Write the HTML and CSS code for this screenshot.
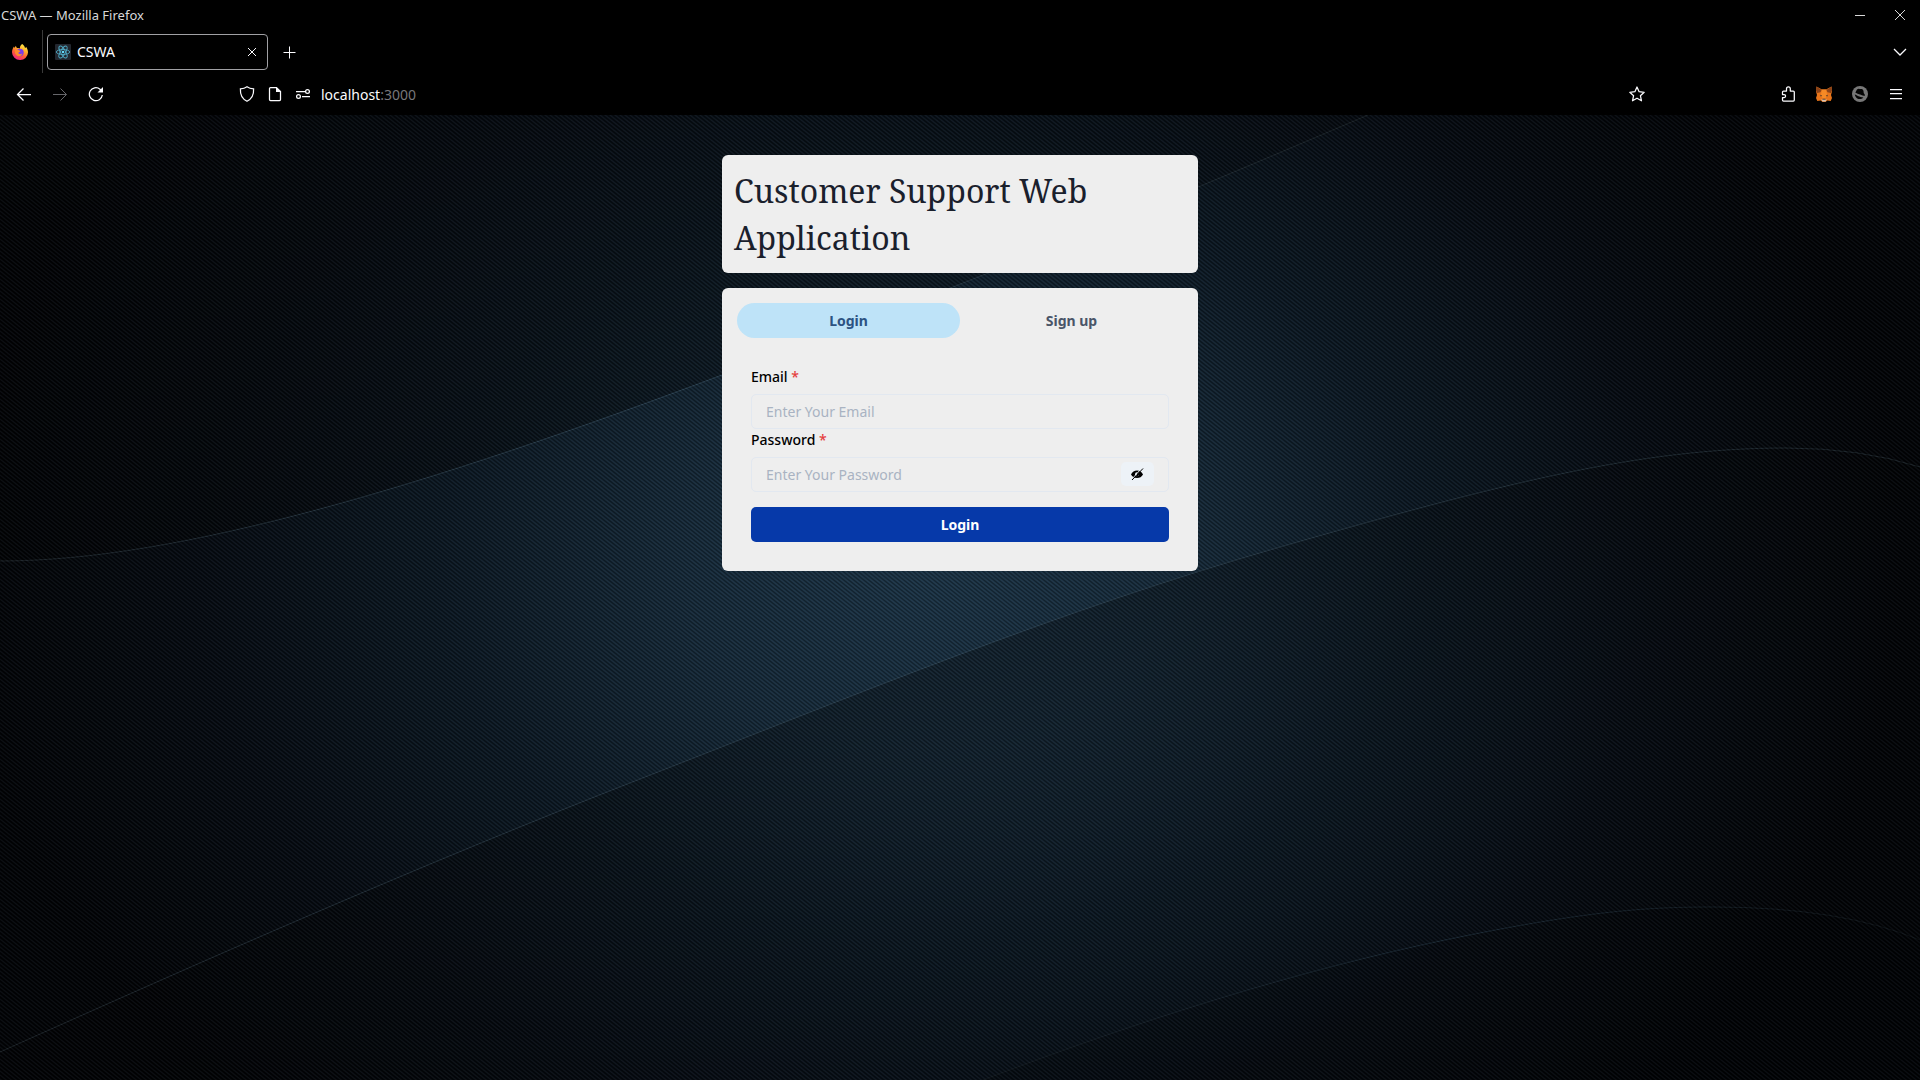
FILE: index.html
```html
<!DOCTYPE html>
<html lang="en">
<head>
<meta charset="utf-8">
<title>CSWA</title>
<link rel="stylesheet" href="styles.css">
</head>
<body>
<header class="browser">
  <div class="titlebar">
    <span class="window-title">CSWA — Mozilla Firefox</span>
    <button class="window-btn" type="button" aria-label="Minimize"><svg class="icon" viewBox="0 0 16 16"><path d="M3 8.5h10"/></svg></button>
    <button class="window-btn" type="button" aria-label="Close"><svg class="icon" viewBox="0 0 16 16"><path d="M3 3l10 10M13 3L3 13"/></svg></button>
  </div>
  <div class="tabstrip">
    <button class="view-btn" type="button" aria-label="Firefox View">
      <svg class="icon logo" viewBox="0 0 16 16">
        <defs>
          <linearGradient id="flame" x1="0.8" y1="0" x2="0.3" y2="1"><stop offset="0" stop-color="#fff44f"/><stop offset="0.35" stop-color="#ffb02a"/><stop offset="0.65" stop-color="#ff5a36"/><stop offset="1" stop-color="#f0208a"/></linearGradient>
        </defs>
        <path fill="url(#flame)" d="M10.200 0C12 1.200 12.800 2.500 13 4c.8-.3 1-.8 1-1.200 1.300 1.700 2 3.600 2 5.700A7.800 7.800 0 0 1 8 16 7.900 7.900 0 0 1 0 8.300C0 6.200.8 4 2 2.500l.3 1.600C3 2.800 3.500 2.200 4 1.700c0 1.100.5 1.800 1.300 2.300 1.200-.2 1.900 0 2.600.4C7.800 2.500 8.800 1 10.200 0z"/>
        <circle cx="8" cy="8.500" r="3.700" fill="#7a3bea"/>
        <path fill="#ff8a2b" d="M3 6.300c1.500-1 2.700-.8 4 0 .6.300 1.400.5 1.400 1C8 8.200 6.500 8 6.300 9c.7 1.400 3 1.600 4 .2-.3 2-1.600 3-3.300 3-2.800 0-4.700-3-4-5.900z"/>
      </svg>
    </button>
    <div class="tab">
      <svg class="icon favicon" viewBox="0 0 16 16">
        <rect width="16" height="16" rx="1" fill="#23272f" stroke="none"/>
        <g fill="none" stroke="#4fa9c4" stroke-width="0.9"><ellipse cx="8" cy="8" rx="6.700" ry="2.500"/><ellipse cx="8" cy="8" rx="6.700" ry="2.500" transform="rotate(60 8 8)"/><ellipse cx="8" cy="8" rx="6.700" ry="2.500" transform="rotate(120 8 8)"/></g>
        <circle cx="8" cy="8" r="1.300" fill="#61dafb" stroke="none"/>
      </svg>
      <span class="tab-label">CSWA</span>
      <button class="tab-close" type="button" aria-label="Close tab"><svg class="icon" viewBox="0 0 16 16"><path d="M4 4l8 8M12 4l-8 8"/></svg></button>
    </div>
    <button class="tool-btn" type="button" aria-label="New tab"><svg class="icon" viewBox="0 0 16 16"><path d="M8.500 2.500v12M2.500 8.500h12"/></svg></button>
    <button class="tool-btn push-right" type="button" aria-label="List all tabs"><svg class="icon bold" viewBox="0 0 16 16"><path d="M2 5l6 6 6-6"/></svg></button>
  </div>
  <nav class="toolbar" aria-label="Navigation">
    <button class="tool-btn" type="button" aria-label="Back"><svg class="icon bold" viewBox="0 0 16 16"><path d="M15 8.500H1.500M7.500 2.500l-6 6 6 6"/></svg></button>
    <button class="tool-btn" type="button" aria-label="Forward" disabled><svg class="icon" viewBox="0 0 16 16"><path d="M1 8.500h13.500M8.500 2.500l6 6-6 6"/></svg></button>
    <button class="tool-btn" type="button" aria-label="Reload"><svg class="icon bold" viewBox="0 0 16 16"><path d="M14.300 9A6.500 6.500 0 1 1 12 3.200l1 1"/><path class="solid" d="M15 1v5.500H9.500z"/></svg></button>
    <span class="spacer"></span>
    <div class="urlbar">
      <button class="url-btn" type="button" aria-label="Tracking protection"><svg class="icon bold" viewBox="0 0 16 16"><path d="M8 .8c2 1.500 4.200 2 6.600 2.100.3 5.600-1.600 10-6.600 12.300C3 12.900 1.100 8.500 1.400 2.900 3.800 2.800 6 2.300 8 .8z"/></svg></button>
      <button class="url-btn" type="button" aria-label="Site information"><svg class="icon bold" viewBox="0 0 16 16"><path d="M3.500 1.500h6l4 4v8a1 1 0 0 1-1 1h-9a1 1 0 0 1-1-1v-11a1 1 0 0 1 1-1z"/><path class="solid" d="M9 1v5h5z"/></svg></button>
      <button class="url-btn" type="button" aria-label="Permissions"><svg class="icon bold" viewBox="0 0 16 16"><path d="M1 5.500h9M7 10.500h8"/><circle cx="12.500" cy="5.500" r="1.900"/><circle cx="3.500" cy="10.500" r="1.900"/></svg></button>
      <div class="address" role="textbox" aria-label="Address">localhost<span class="port">:3000</span></div>
      <button class="url-btn" type="button" aria-label="Bookmark this page"><svg class="icon bold" viewBox="0 0 16 16"><path stroke-linejoin="round" d="M8 1l2.100 4.700 5.100.6-3.800 3.400 1.100 5.100L8 12.200l-4.500 2.600 1.100-5.100L.8 6.300l5.100-.6z"/></svg></button>
    </div>
    <span class="spacer"></span>
    <button class="tool-btn" type="button" aria-label="Extensions"><svg class="icon bold" viewBox="0 0 16 16"><path stroke-linejoin="round" d="M2.500 8.500V6a1 1 0 0 1 1-1H6.500V2.800a1.900 1.900 0 0 1 3.800 0V5h3a1 1 0 0 1 1 1v8a1 1 0 0 1-1 1h-9.800a1 1 0 0 1-1-1v-2.500h1.600a1.500 1.500 0 0 0 0-3z"/></svg></button>
    <button class="tool-btn" type="button" aria-label="MetaMask">
      <svg class="icon logo" viewBox="0 0 16 16">
        <path fill="#e8751a" d="M.5.5L6 3.500h4l5.500-3 .5 5-1 3.500 1 3-1.300 3-3.400-.6L9.500 16h-3l-1.800-1.600-3.400.6L0 12l1-3-1-3.500z"/>
        <path fill="#8a4319" d="M.5.5L5.600 4 4.500 6.300 1 7 0 4.500zM15.500.5L10.400 4l1.100 2.300 3.500.7 1-2.500z"/>
        <path fill="#f58a26" d="M6 3.500h4l1 5-1.500 4h-3L5 8.500z"/>
        <path fill="#3a342e" d="M4.200 8.800l2 1-1.500.6zM11.800 8.800l-2 1 1.500.6zM6.700 12.700h2.600l.3 1H6.400z"/>
        <path fill="#d5c4b5" d="M5.200 13.200l1.200.6h3.200l1.200-.6-1.200 2.300H6.400z"/>
      </svg>
    </button>
    <button class="tool-btn" type="button" aria-label="Content blocker">
      <svg class="icon logo" viewBox="0 0 16 16"><circle cx="8" cy="8" r="8" fill="#777"/><path fill="#050505" d="M3.300 6.400c1-.3 1-3.600 3.400-3.600 1 0 1.500.5 2.500.2 2.500 0 2.300 2.500 2.600 4.200.5.800 1.400 1.500 1.200 2.300-1.800.6-3.400-.3-5-.9-1.600-.6-3.200-1.500-4.700-2.200zM2.800 8.500c2.500.7 4.300 2.800 8.600 2.900-1.500 1.800-4.300 2-6.100 1.100C4 11.800 3.100 10.200 2.800 8.500z"/></svg>
    </button>
    <button class="tool-btn" type="button" aria-label="Menu"><svg class="icon bold" viewBox="0 0 16 16"><path d="M2 3.500h12M2 7.500h12M2 12.500h12"/></svg></button>
  </nav>
</header>

<main class="page">
  <svg class="backdrop" viewBox="0 0 1920 965" preserveAspectRatio="none" aria-hidden="true">
    <defs>
      <radialGradient id="glow" gradientUnits="userSpaceOnUse" cx="0" cy="0" r="1" gradientTransform="translate(930 450) scale(970 760)">
        <stop offset="0" stop-color="#1b3345"/><stop offset="0.250" stop-color="#152938"/><stop offset="0.500" stop-color="#0b1721"/><stop offset="0.750" stop-color="#050a10"/><stop offset="1" stop-color="#010204"/>
      </radialGradient>
      <linearGradient id="shade-top" x1="0" y1="1" x2="0" y2="0"><stop offset="0" stop-color="#000" stop-opacity="0.450"/><stop offset="1" stop-color="#000" stop-opacity="0.200"/></linearGradient>
      <linearGradient id="shade-low" gradientUnits="userSpaceOnUse" x1="900" y1="520" x2="1060" y2="900"><stop offset="0" stop-color="#000" stop-opacity="0.350"/><stop offset="1" stop-color="#000" stop-opacity="0"/></linearGradient>
      <linearGradient id="edge" x1="0" y1="0" x2="1" y2="0"><stop offset="0" stop-color="#1a2024"/><stop offset="0.500" stop-color="#2b4252"/><stop offset="1" stop-color="#181f23"/></linearGradient>
    </defs>
    <rect width="1920" height="965" fill="url(#glow)"/>
    <path fill="url(#shade-top)" d="M0 446C180 446 430 370 722 260C900 195 1100 115 1368 0H0z"/>
    <path fill="url(#shade-low)" d="M0 937C200 847 420 750 640 664S1060 495 1280 432S1640 333 1786 333Q1860 333 1920 352V965H0z"/>
    <path fill="#000" fill-opacity="0.200" d="M983 965C1140 905 1300 855 1445 825S1650 792 1714 792Q1840 792 1920 825V965z"/>
    <g class="waves" stroke="url(#edge)">
      <path d="M0 446C180 446 430 370 722 260C900 195 1100 115 1368 0"/>
      <path d="M0 937C200 847 420 750 640 664S1060 495 1280 432S1640 333 1786 333Q1860 333 1920 352"/>
      <path class="faint" d="M983 965C1140 905 1300 855 1445 825S1650 792 1714 792Q1840 792 1920 825"/>
    </g>
  </svg>
  <svg class="backdrop" aria-hidden="true">
    <defs>
      <pattern id="twill" width="5" height="4" patternUnits="userSpaceOnUse">
        <path d="M-1.250-1L6.250 5M-1.250 3L1.250 5M3.750-1L6.250 1" stroke="#9fc0d0" stroke-opacity="0.070" stroke-width="1.200"/>
        <path d="M-1.250 1L3.750 5M1.250-1L6.250 3" stroke="#000" stroke-opacity="0.280" stroke-width="1.200"/>
      </pattern>
    </defs>
    <rect width="100%" height="100%" fill="url(#twill)"/>
  </svg>
  <div class="content">
    <h1 class="card heading">Customer Support Web Application</h1>
    <section class="card auth">
      <div class="auth-tabs" role="tablist">
        <button class="auth-tab selected" type="button" role="tab" aria-selected="true">Login</button>
        <button class="auth-tab" type="button" role="tab" aria-selected="false">Sign up</button>
      </div>
      <form class="panel">
        <label class="label" for="email">Email <span class="required">*</span></label>
        <input class="field" id="email" type="email" placeholder="Enter Your Email">
        <label class="label" for="password">Password <span class="required">*</span></label>
        <div class="field-group">
          <input class="field" id="password" type="password" placeholder="Enter Your Password">
          <button class="reveal" type="button" aria-label="Show password">
            <svg class="eye" viewBox="0 0 14 14"><path d="M1 7.500C2.300 4.800 4.300 3.600 7 3.600S11.700 4.800 13 7.500C11.700 10 9.700 11 7 11S2.300 10 1 7.500z"/><circle cx="7" cy="7.300" r="2" fill="#edf2f7"/><path d="M7 5.300a2 2 0 0 1 0 4z"/><path class="gap" d="M1.500 12.500l10-11"/><path class="slash" d="M2 13L13 1.500"/></svg>
          </button>
        </div>
        <button class="submit" type="submit">Login</button>
      </form>
    </section>
  </div>
</main>
</body>
</html>
```
FILE: styles.css
```css
* {
  box-sizing: border-box;
}

body {
  margin: 0;
  min-height: 100vh;
  display: flex;
  flex-direction: column;
  background: #000;
  font: 14px/21px "Noto Sans", sans-serif;
}

button {
  margin: 0;
  padding: 0;
  border: 0;
  background: none;
  color: inherit;
  font: inherit;
}

/* Browser window */
.browser {
  color: #fbfbfe;
  background: #000;
}

.icon {
  display: block;
  width: 16px;
  height: 16px;
  fill: none;
  stroke: currentColor;
  stroke-width: 1;
}

.icon.bold {
  stroke-width: 1.25;
}

.icon .solid {
  fill: currentColor;
  stroke: none;
}

.icon.logo {
  stroke: none;
}

.titlebar {
  display: flex;
  align-items: center;
  height: 30px;
  color: #d8d8d8;
}

.window-title {
  flex: 1;
  padding-left: 1px;
  font-size: 13px;
}

.window-btn {
  display: grid;
  place-items: center;
  width: 40px;
  height: 30px;
}

.tabstrip {
  display: flex;
  align-items: center;
  height: 43px;
}

.view-btn {
  display: grid;
  place-items: center;
  width: 43px;
  height: 43px;
  padding-right: 2px;
  border-right: 1px solid #3a3a3a;
}

.tab {
  display: flex;
  align-items: center;
  gap: 6px;
  width: 221px;
  height: 36px;
  margin: 0 3px 0 4px;
  padding: 0 7px;
  border: 1px solid #a0a0a4;
  border-radius: 4px;
}

.tab-label {
  flex: 1;
}

.tool-btn {
  display: grid;
  place-items: center;
  width: 36px;
  height: 36px;
}

.tool-btn:disabled {
  color: #66666a;
}

.push-right {
  margin: 0 2px 0 auto;
}

.toolbar {
  display: flex;
  align-items: center;
  height: 42px;
  padding: 0 6px;
}

.spacer {
  flex: 0 1 119px;
}

.urlbar {
  flex: 1;
  display: flex;
  align-items: center;
}

.url-btn {
  display: grid;
  place-items: center;
  width: 28px;
  height: 28px;
}

.address {
  flex: 1;
  padding-left: 4px;
}

.port {
  color: #77777b;
}

/* Page */
.page {
  position: relative;
  flex: 1;
  padding: 40px 16px;
}

.backdrop {
  position: absolute;
  inset: 0;
  width: 100%;
  height: 100%;
}

.waves {
  fill: none;
  stroke-width: 1;
}

.waves .faint {
  stroke-opacity: 0.5;
}

.content {
  position: relative;
  display: flex;
  flex-direction: column;
  gap: 15px;
  max-width: 476px;
  margin: 0 auto;
}

.card {
  margin: 0;
  border-radius: 6px;
  background: #eee;
}

.heading {
  padding: 12px;
  color: #1a202c;
  font: 400 32px/47px "Noto Serif", "DejaVu Serif Condensed", "DejaVu Serif", serif;
}

.auth {
  padding: 15px;
}

.auth-tabs {
  display: grid;
  grid-template-columns: 1fr 1fr;
}

.auth-tab {
  height: 35px;
  border-radius: 18px;
  color: #4a5568;
  font-weight: 700;
}

.auth-tab.selected {
  background: #bee3f8;
  color: #2c5282;
}

.panel {
  display: flex;
  flex-direction: column;
  padding: 28px 14px 14px;
}

.label {
  margin-bottom: 7px;
  color: #000;
  font-weight: 500;
}

.required {
  color: #e53e3e;
}

.field {
  display: block;
  width: 100%;
  height: 35px;
  padding: 0 14px;
  border: 1px solid #e2e8f0;
  border-radius: 5px;
  background: transparent;
  color: #1a202c;
  font: inherit;
}

.field::placeholder {
  color: #a9b3c2;
  opacity: 1;
}

.field-group {
  position: relative;
}

.reveal {
  position: absolute;
  top: 5px;
  right: 15px;
  display: grid;
  place-items: center;
  width: 33px;
  height: 24px;
  padding-right: 1px;
  border-radius: 5px;
  background: #edf2f7;
}

.eye {
  width: 14px;
  height: 14px;
  fill: #000;
}

.eye .gap {
  stroke: #edf2f7;
  stroke-width: 1;
}

.eye .slash {
  stroke: #000;
  stroke-width: 1;
}

.submit {
  height: 35px;
  margin-top: 15px;
  border-radius: 5px;
  background: #0639a9;
  color: #fff;
  font-weight: 700;
}
```
